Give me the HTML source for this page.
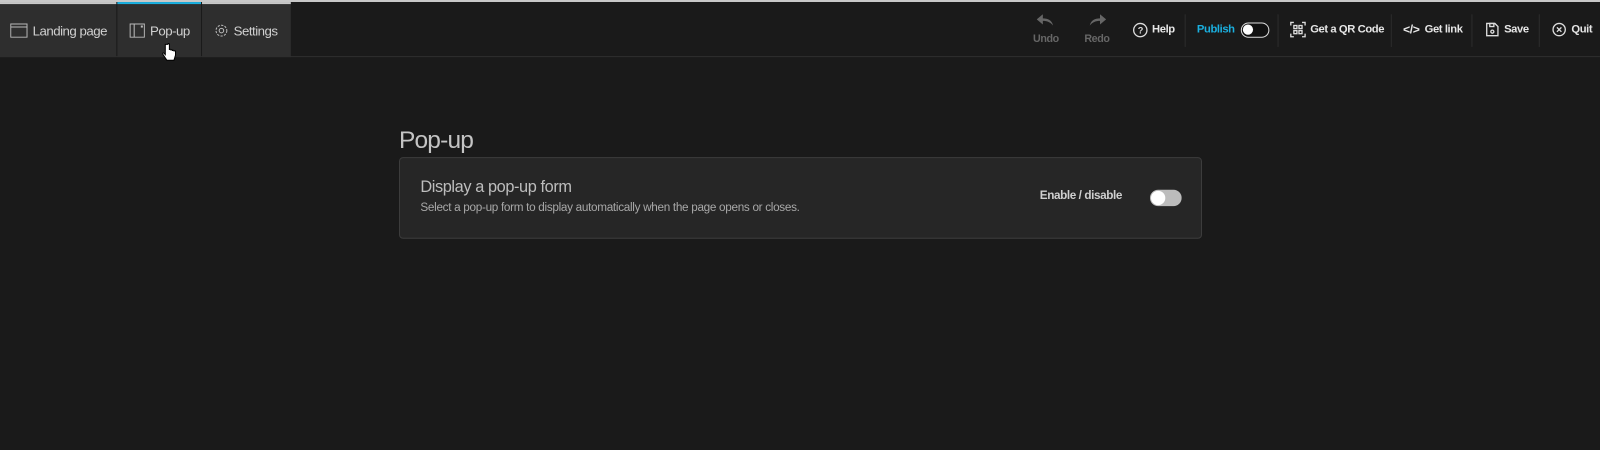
<!DOCTYPE html>
<html><head><meta charset="utf-8"><style>
*{box-sizing:border-box;margin:0;padding:0}
body{width:1600px;height:450px;background:#1a1a1a;font-family:"Liberation Sans",sans-serif;overflow:hidden;color:#ccc}
#w{position:relative;width:1568px;height:441px;transform:scale(1.0204);transform-origin:0 0}
.top{position:absolute;left:0;top:0;width:1568px;height:2px;background:#c8c8c8}
.hdr{position:absolute;left:0;top:2px;width:1568px;height:54px;border-bottom:1px solid #2e2e2e;background:#1a1a1a}
.tab{position:absolute;top:0;height:54px;background:#2e2e2e;display:flex;align-items:center;font-size:13px;color:#d0d0d0;letter-spacing:-0.5px;border-top:2px solid #c8c8c8}
.tab svg{margin-right:5px}
.r{position:absolute;top:0;height:54px;display:flex;align-items:center;font-size:11px;font-weight:bold;color:#e6e6e6;letter-spacing:-0.4px}
.sep{position:absolute;top:12px;width:1px;height:32px;background:#2c2c2c}
.card{position:absolute;left:391px;top:154px;width:787px;height:80px;background:#262626;border:1px solid #3c3c3c;border-radius:4px}
</style></head><body><div id="w">
<div class="top"></div>
<div class="hdr">
<div class="tab" style="left:0;width:114px;padding-left:10px"><svg width="17" height="14" viewBox="0 0 17 14"><rect x="0.5" y="0.5" width="16" height="13" fill="none" stroke="#bbb"/><line x1="0.5" y1="3.5" x2="16.5" y2="3.5" stroke="#bbb"/></svg>Landing page</div>
<div class="tab" style="left:115px;width:82px;padding-left:12px;border-top-color:#1ab0e0"><svg width="15" height="14" viewBox="0 0 15 14"><rect x="0.5" y="0.5" width="14" height="13" fill="none" stroke="#bbb"/><line x1="4.5" y1="0.5" x2="4.5" y2="13.5" stroke="#bbb"/><rect x="11" y="2" width="2" height="2" fill="#bbb"/></svg>Pop-up</div>
<div class="tab" style="left:198px;width:87px;padding-left:12px"><svg width="14" height="14" viewBox="0 0 14 14"><circle cx="7" cy="7" r="2.2" fill="none" stroke="#bbb"/><circle cx="7" cy="7" r="5.3" fill="none" stroke="#bbb" stroke-dasharray="2.2 1.3"/></svg>Settings</div>
<div class="r" style="left:1011px;width:28px;flex-direction:column;justify-content:center;color:#666;font-size:10.5px"><svg width="18" height="12" viewBox="0 0 18 12"><path d="M16 11C15 6 11 4 6 4V0L0 5l6 5V6.5c4 0 7 1 10 4.5z" fill="#666"/></svg><span style="margin-top:6px">Undo</span></div>
<div class="r" style="left:1061px;width:28px;flex-direction:column;justify-content:center;color:#666;font-size:10.5px"><svg width="18" height="12" viewBox="0 0 18 12"><path d="M2 11C3 6 7 4 12 4V0l6 5-6 5V6.5c-4 0-7 1-10 4.5z" fill="#666"/></svg><span style="margin-top:6px">Redo</span></div>
<div class="r" style="left:1110px"><svg width="15" height="15" viewBox="0 0 15 15" style="margin-right:4px"><circle cx="7.5" cy="7.5" r="6.5" fill="none" stroke="#ddd" stroke-width="1.3"/><text x="7.5" y="11" font-size="9" text-anchor="middle" fill="#ddd" font-weight="bold" font-family="Liberation Sans">?</text></svg>Help</div>
<div class="sep" style="left:1161px"></div>
<div class="r" style="left:1173px;color:#1ab0e0">Publish<span style="display:inline-block;margin-left:6px;width:28px;height:15px;border:1.5px solid #ddd;border-radius:8px;background:#111;position:relative"><span style="position:absolute;left:1px;top:1px;width:10px;height:10px;border-radius:50%;background:#fff"></span></span></div>
<div class="sep" style="left:1252px"></div>
<div class="r" style="left:1264px"><svg width="16" height="16" viewBox="0 0 16 16" style="margin-right:4px" fill="none" stroke="#ddd" stroke-width="1.3"><path d="M1 4V1h3M12 1h3v3M15 12v3h-3M4 15H1v-3"/><rect x="4" y="4" width="3" height="3"/><rect x="9" y="4" width="3" height="3"/><rect x="4" y="9" width="3" height="3"/><rect x="9" y="9" width="3" height="3"/></svg>Get a QR Code</div>
<div class="sep" style="left:1363px"></div>
<div class="r" style="left:1375px"><span style="margin-right:5px;font-size:12px">&lt;/&gt;</span>Get link</div>
<div class="sep" style="left:1442px"></div>
<div class="r" style="left:1456px"><svg width="13" height="14" viewBox="0 0 13 14" style="margin-right:5px" fill="none" stroke="#ddd" stroke-width="1.3"><path d="M1 1h8l3 3v9H1z"/><rect x="4" y="1" width="4" height="3"/><circle cx="6.5" cy="9" r="1.5"/></svg>Save</div>
<div class="sep" style="left:1508px"></div>
<div class="r" style="left:1521px"><svg width="14" height="14" viewBox="0 0 14 14" style="margin-right:5px" fill="none" stroke="#ddd" stroke-width="1.3"><circle cx="7" cy="7" r="6"/><path d="M4.8 4.8l4.4 4.4M9.2 4.8l-4.4 4.4"/></svg>Quit</div>
</div>
<svg style="position:absolute;left:159px;top:42px" width="14" height="20" viewBox="0 0 14 20"><path d="M3 1.5v10L1.5 10C.5 9.5 0 10.5.8 11.5L4.5 17h7l1.5-5V8.5c0-1-1.5-1-1.5 0V8c0-1-1.5-1-1.5 0V7.5c0-1-1.5-1-1.5 0V7c0-1-1.5-1-1.5 0V1.5c0-1.2-1.5-1.2-1.5 0z" fill="#fff" stroke="#000" stroke-width="1"/></svg>
<div style="position:absolute;left:391px;top:124px;font-size:24px;color:#c4c4c4;letter-spacing:-0.8px">Pop-up</div>
<div class="card">
<div style="position:absolute;left:20px;top:20px;font-size:16px;color:#bdbdbd;letter-spacing:-0.4px">Display a pop-up form</div>
<div style="position:absolute;left:20px;top:43px;font-size:11.5px;color:#a8a8a8;letter-spacing:-0.3px">Select a pop-up form to display automatically when the page opens or closes.</div>
<div style="position:absolute;left:627px;top:31px;font-size:11.5px;font-weight:bold;color:#cfcfcf;letter-spacing:-0.4px">Enable / disable</div>
<div style="position:absolute;left:735px;top:31px;width:31px;height:16px;border-radius:8px;background:#bcbcbc"><div style="position:absolute;left:1px;top:1px;width:14px;height:14px;border-radius:50%;background:#fff"></div></div>
</div>
</div></body></html>
